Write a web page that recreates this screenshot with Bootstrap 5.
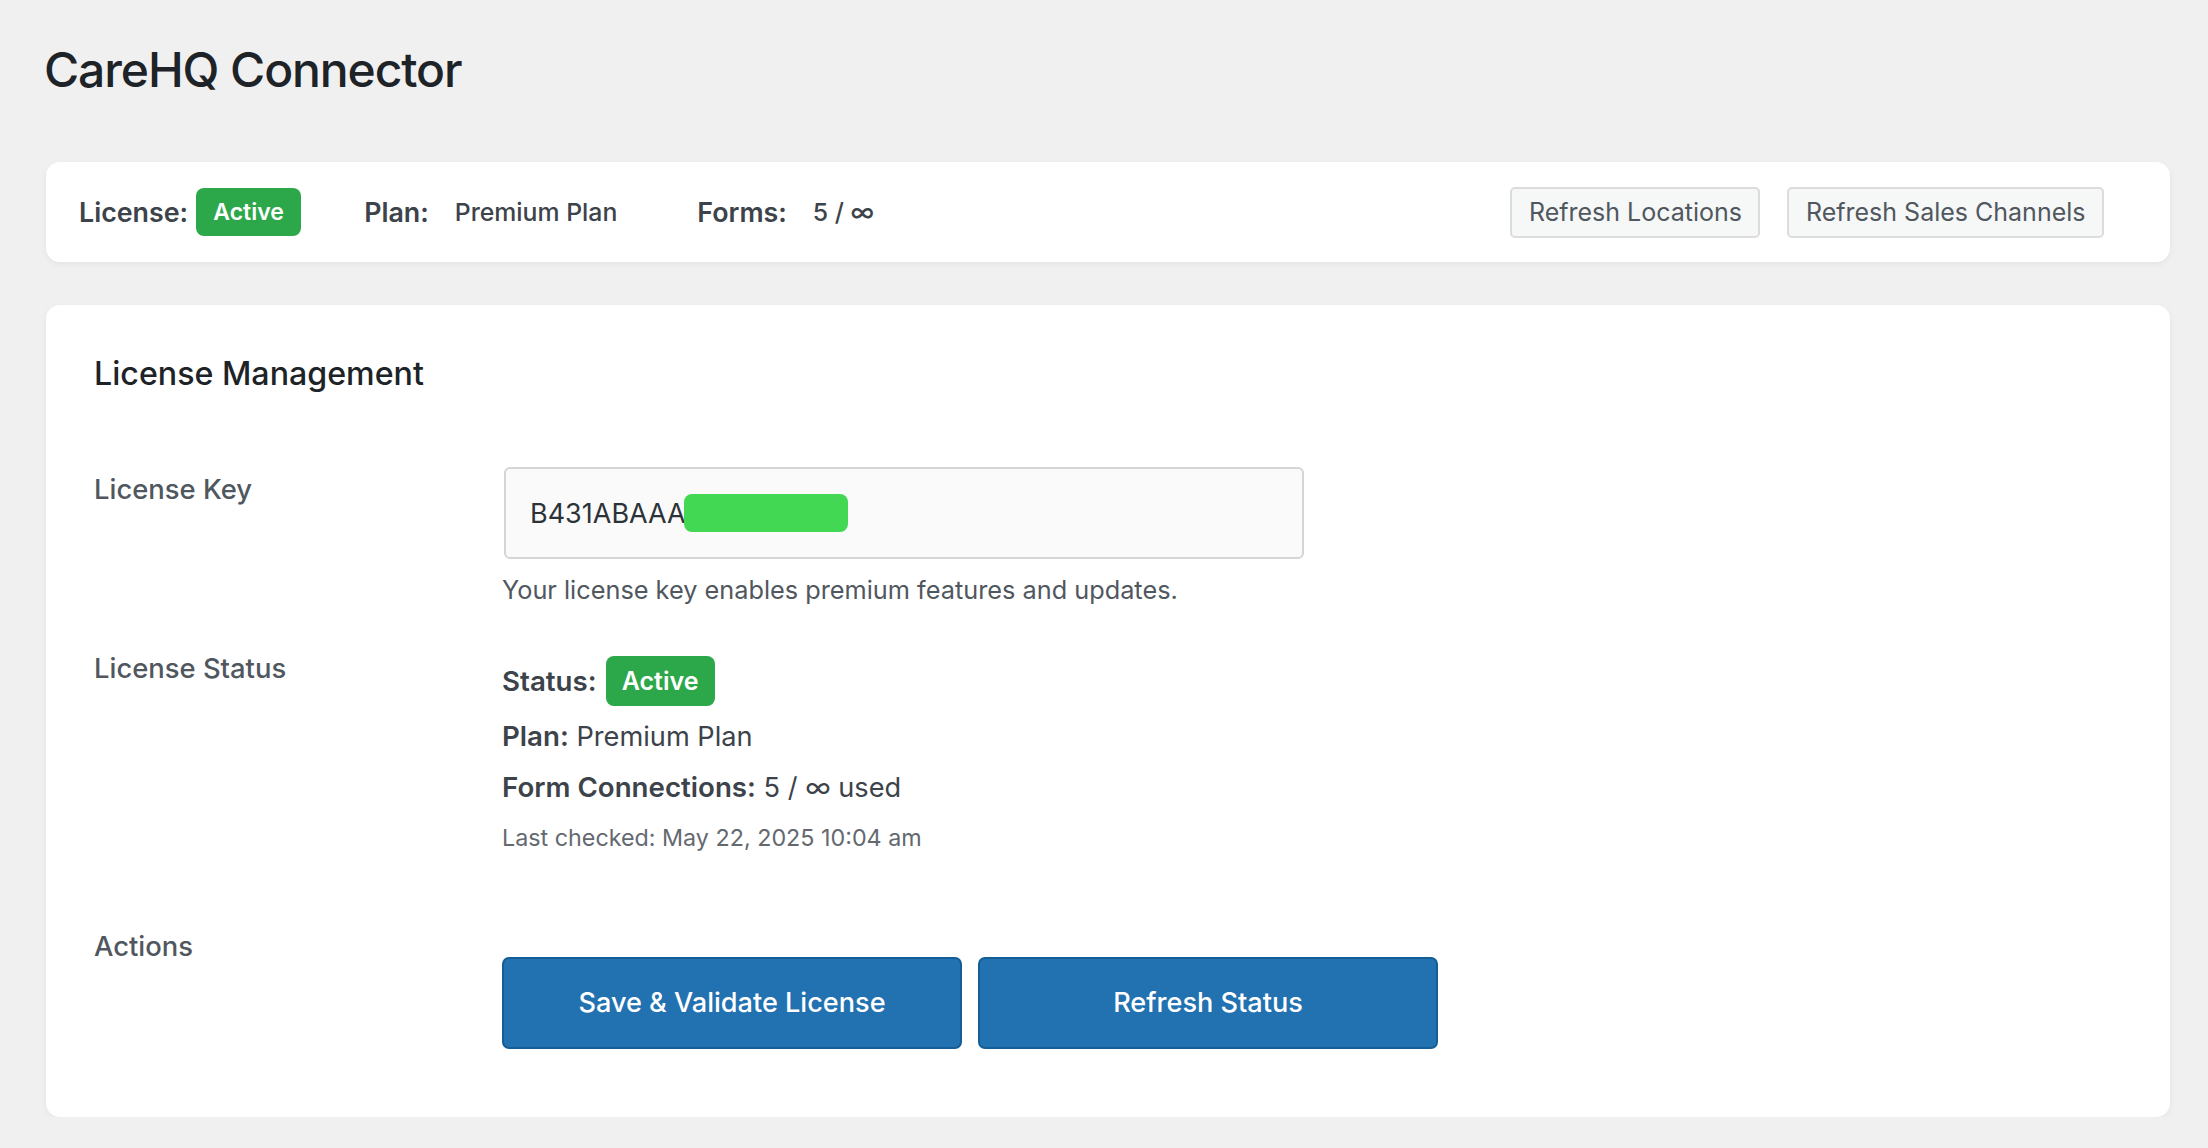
<!DOCTYPE html>
<html lang="en">
<head>
    <meta charset="UTF-8">
    <title>CareHQ Connector</title>
    <link href="https://cdn.jsdelivr.net/npm/bootstrap@5.3.0/dist/css/bootstrap.min.css" rel="stylesheet">
    <style>
        body {
            background: #f0f0f1;
            color: #3c434a;
            font-family: Inter, "Liberation Sans", sans-serif;
            font-size: 26px;
            line-height: 36px;
        }
        .page-wrap {
            padding: 41px 38px 0 46px;
        }
        .page-title {
            color: #1d2327;
            font-size: 48px;
            font-weight: 500;
            letter-spacing: -1.1px;
            line-height: 58px;
            margin: 0 0 63px -2px;
        }
        .panel {
            background: #fff;
            border: 0;
            border-radius: 14px;
            box-shadow: 0 2px 6px rgba(0, 0, 0, .05);
        }
        .status-bar {
            height: 100px;
            margin-bottom: 43px;
            padding: 0 66px 0 33px;
        }
        .status-bar strong {
            font-size: 26.8px;
            font-weight: 600;
        }
        .status-line strong {
            font-size: 27.7px;
            font-weight: 600;
        }
        .status-bar .val {
            font-size: 24.8px;
            font-weight: 500;
            margin-left: 26px;
        }
        .status-bar .item-gap {
            margin-left: 63px;
        }
        .status-bar .item-gap-lg {
            margin-left: 80px;
        }
        .status-badge {
            background: #2ca84a;
            border-radius: 8px;
            color: #fff;
            font-weight: 600;
            margin-left: 8px;
            text-align: center;
        }
        .badge-top {
            font-size: 23px;
            height: 48px;
            line-height: 48px;
            width: 105px;
        }
        .badge-line {
            font-size: 25px;
            height: 50px;
            line-height: 50px;
            margin-left: 9px;
            width: 109px;
        }
        .refresh-group {
            gap: 27px;
        }
        .btn-refresh {
            background: #f6f7f7;
            border: 2px solid #dcdcde;
            border-radius: 5px;
            color: #50575e;
            font-size: 25px;
            height: 51px;
            line-height: 1;
            padding: 0 16.5px;
        }
        .manage {
            height: 812px;
            padding: 49px 48px 0;
        }
        .manage h2 {
            color: #1d2327;
            font-size: 32.2px;
            font-weight: 500;
            line-height: 40px;
            margin-bottom: 73px;
        }
        .field-label {
            color: #50575e;
            font-size: 27.4px;
            font-weight: 500;
            width: 408px;
        }
        .row-key {
            margin-bottom: 42px;
        }
        .row-key .field-label {
            padding-top: 4px;
        }
        .row-status {
            margin-bottom: 72px;
        }
        .row-status .status-col {
            padding-top: 6px;
        }
        .key-box {
            width: 800px;
            position: relative;
        }
        .key-box .form-control {
            background: #fafafa;
            border: 2px solid #d5d5d5;
            border-radius: 6px;
            color: #2c3338;
            font-size: 27px;
            height: 92px;
            margin-left: 2px;
            padding: 0 24px;
        }
        .redact {
            background: #43d854;
            border-radius: 8px;
            height: 38px;
            left: 182px;
            position: absolute;
            top: 27px;
            width: 164px;
        }
        .help-text {
            color: #50575e;
            font-size: 25.3px;
            margin-top: 13px;
        }
        .status-line {
            font-size: 27.2px;
            margin-bottom: 14px;
        }
        .status-line.first {
            margin-bottom: 12px;
        }
        .last-checked {
            color: #646970;
            font-size: 23.3px;
        }
        .action-col {
            margin-top: 29px;
        }
        .btn-action {
            background: #2271b1;
            border: 2px solid #135e96;
            border-radius: 7px;
            color: #fff;
            font-size: 27.1px;
            font-weight: 500;
            height: 92px;
            width: 460px;
        }
    </style>
</head>
<body>

<div class="page-wrap">
    <h1 class="page-title">CareHQ Connector</h1>

    <div class="panel status-bar d-flex align-items-center">
        <strong>License:</strong>
        <span class="status-badge badge-top">Active</span>
        <strong class="item-gap">Plan:</strong>
        <span class="val">Premium Plan</span>
        <strong class="item-gap-lg">Forms:</strong>
        <span class="val">5 / ∞</span>
        <div class="ms-auto d-flex refresh-group">
            <button class="btn btn-refresh">Refresh Locations</button>
            <button class="btn btn-refresh">Refresh Sales Channels</button>
        </div>
    </div>

    <div class="panel manage">
        <h2>License Management</h2>

        <div class="d-flex row-key">
            <div class="field-label">License Key</div>
            <div>
                <div class="key-box">
                    <input type="text" class="form-control" value="B431ABAAA">
                    <span class="redact"></span>
                </div>
                <div class="help-text">Your license key enables premium features and updates.</div>
            </div>
        </div>

        <div class="d-flex row-status">
            <div class="field-label">License Status</div>
            <div class="status-col">
                <div class="status-line first d-flex align-items-center">
                    <strong>Status:</strong>
                    <span class="status-badge badge-line">Active</span>
                </div>
                <div class="status-line"><strong>Plan:</strong> Premium Plan</div>
                <div class="status-line"><strong>Form Connections:</strong> 5 / ∞ used</div>
                <div class="last-checked">Last checked: May 22, 2025 10:04 am</div>
            </div>
        </div>

        <div class="d-flex">
            <div class="field-label">Actions</div>
            <div class="d-flex gap-3 action-col">
                <button class="btn btn-action">Save &amp; Validate License</button>
                <button class="btn btn-action">Refresh Status</button>
            </div>
        </div>
    </div>
</div>

<script src="https://cdn.jsdelivr.net/npm/bootstrap@5.3.0/dist/js/bootstrap.bundle.min.js"></script>
</body>
</html>
